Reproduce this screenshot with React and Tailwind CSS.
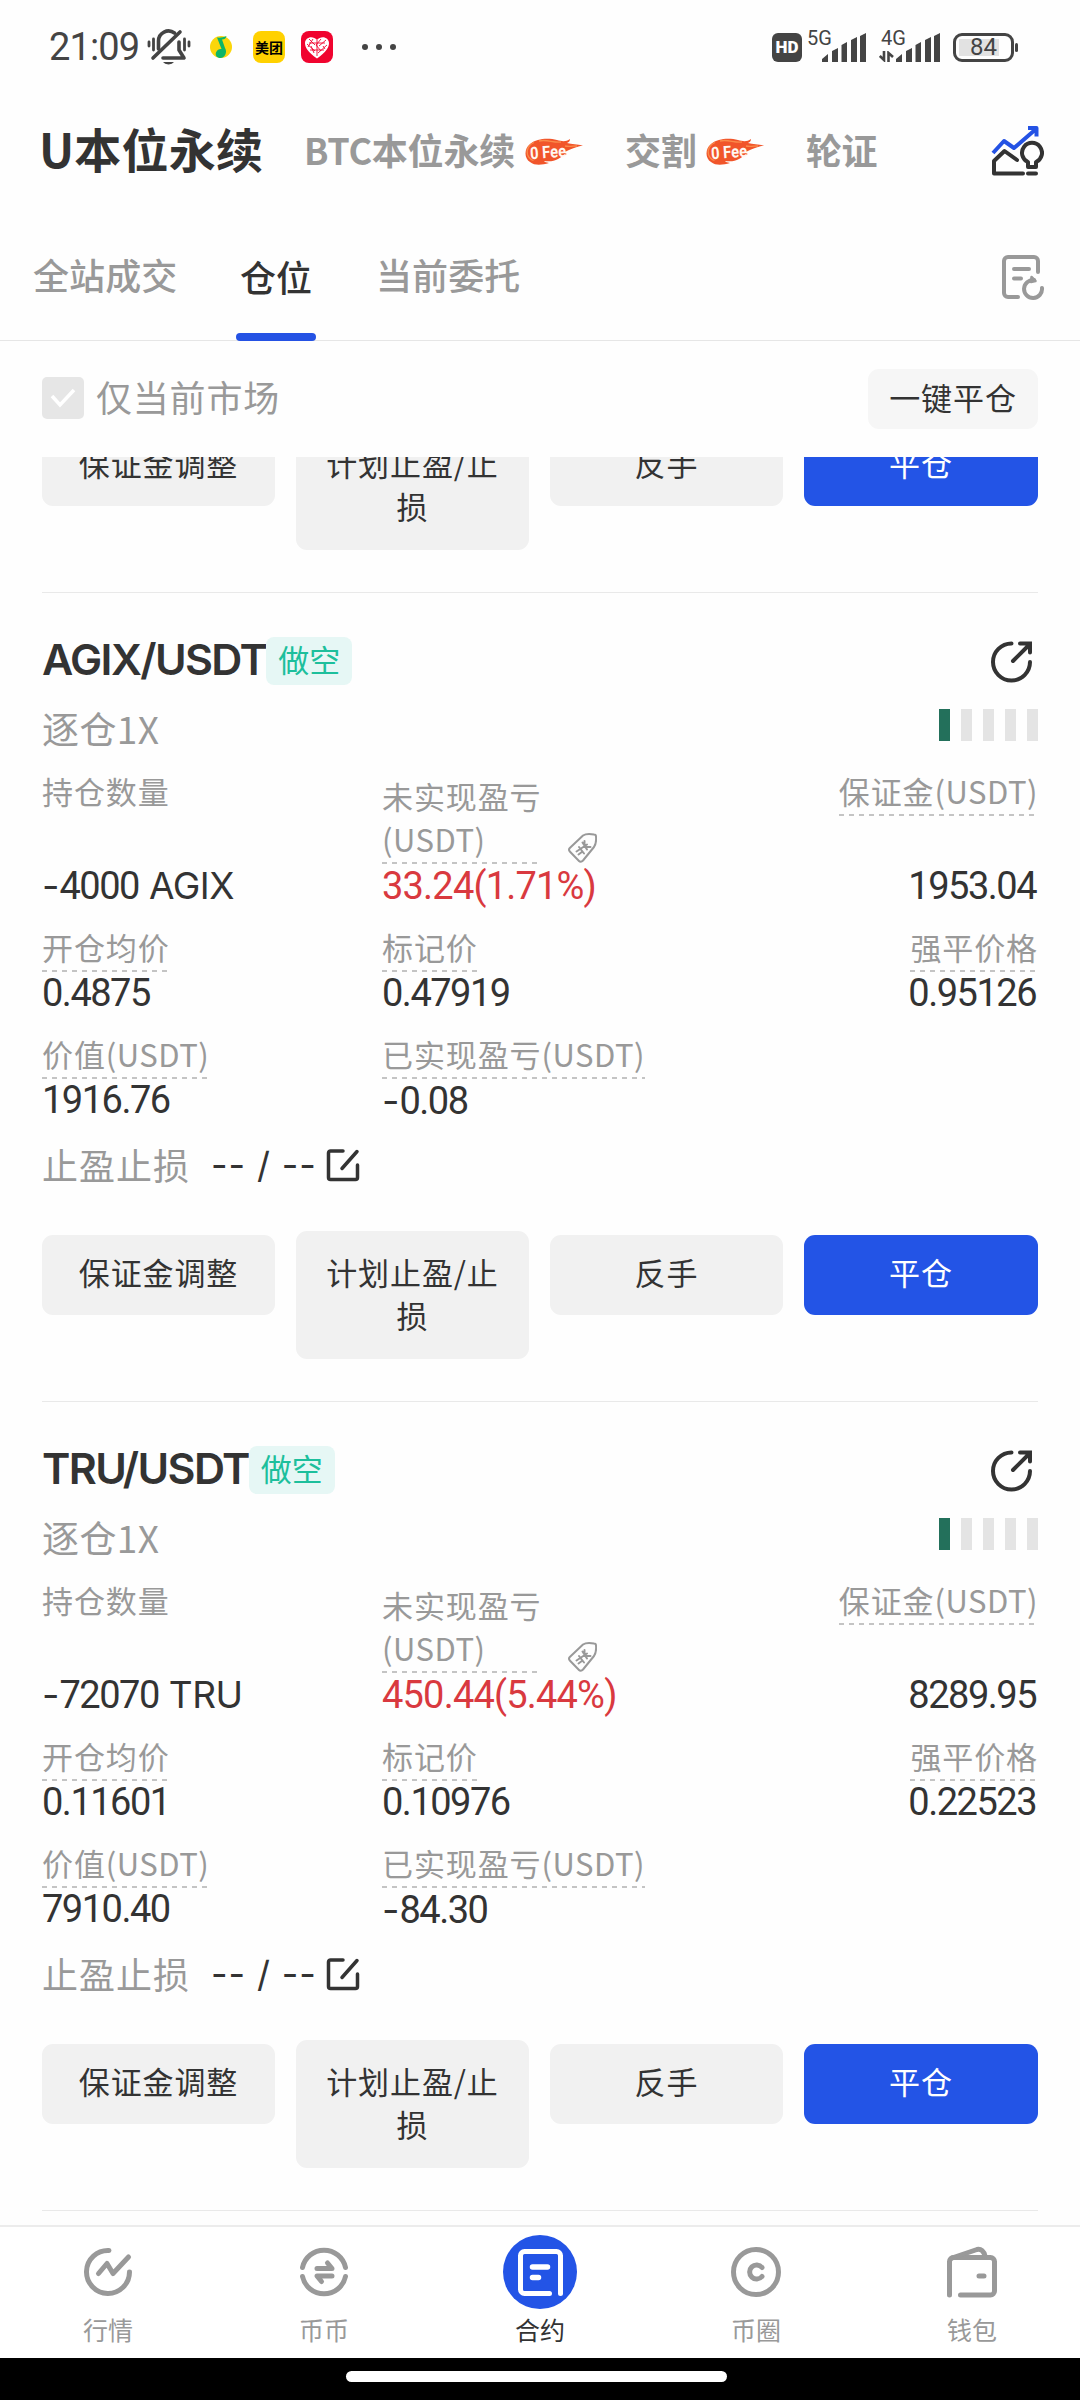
// src/App.jsx
import React from 'react';

const positions = [
  {
    pair: 'AGIX/USDT',
    size: '-4000',
    coin: 'AGIX',
    pnl: '33.24(1.71%)',
    margin: '1953.04',
    entry: '0.4875',
    mark: '0.47919',
    liq: '0.95126',
    value: '1916.76',
    realized: '-0.08',
  },
  {
    pair: 'TRU/USDT',
    size: '-72070',
    coin: 'TRU',
    pnl: '450.44(5.44%)',
    margin: '8289.95',
    entry: '0.11601',
    mark: '0.10976',
    liq: '0.22523',
    value: '7910.40',
    realized: '-84.30',
  },
];

/* ---------- icons ---------- */

const BellOffIcon = () => (
  <svg width="44" height="38" viewBox="0 0 44 38" fill="none" stroke="#444" strokeWidth="3.6" strokeLinecap="round" strokeLinejoin="round">
    <path d="M11.500 21V13a10 10 0 0 1 16-8" />
    <path d="M32 14v8l5 8H16" />
    <path d="M6 30 33 4" />
    <path d="M2 14v4M6.500 11v11M37.500 11v11M42 14v4" strokeWidth="2.800" />
    <path d="M16 34h11a6 4 0 0 1-11 0z" fill="#444" stroke="none" />
  </svg>
);

const MusicIcon = () => (
  <svg width="22" height="22" viewBox="0 0 22 22">
    <circle cx="11" cy="11" r="11" fill="#fbd60a" />
    <path d="M7 1.500c3 .5 6-.2 9.500-1.500-.5 2.500-2 3.500-4.500 3.600L15 12c3 5-1 10-4.500 10S5 19.500 6 16.500s4-4 5.500-3.500z" fill="#0cb568" />
  </svg>
);

const HeartAppIcon = () => (
  <svg width="32" height="32" viewBox="0 0 32 32">
    <rect width="32" height="32" rx="8" fill="#f0042f" />
    <path d="M16 27.500C7 21 4 16.500 4 12c0-6 8-8 12-3 4-5 12-3 12 3 0 4.500-3 9-12 15.500z" fill="#fff" />
    <path d="M8 8l6 6M6 13l8 7M12 8l-5 8M20 8l-5 6 5 6M25 9l-7 6M26 14l-9 8M16 9v16M10 15l3 7M22 15l2 3M9 19h14M8 12h16" stroke="#f0042f" strokeWidth=".9" fill="none" />
  </svg>
);

const SignalBars = () => (
  <svg width="45" height="29" viewBox="0 0 45 29" fill="#444">
    <path d="M0 29v-3l6-5v8zM10 29V18l6-3v14zM19.500 29V12l5.500-3v20zM29 29V7l6-3v25zM38 29V3l6-3v29z" />
  </svg>
);

const DataArrows = () => (
  <svg width="15" height="11" viewBox="0 0 15 11" fill="none" stroke="#444" strokeWidth="2.600">
    <path d="M5 0v9L.8 5M9.500 11V2L14 6" />
  </svg>
);

const FlameBadge = () => (
  <svg width="58" height="27" viewBox="0 0 58 27">
    <path d="M58 7.500c-6-1.500-11-1-16-2.500 2-1 3-2 3-4-4 3-8 2.500-13 1C24 0 12 0 5 6-1 11-1 20 5 24c5 4 12 3 19 1-3-.5-4-1-5-2 5 .5 10 .5 14-2 3-1.500 5-4 9-5-1-.5-2-1-4-1 4-2 10-5.500 20-7.500z" fill="#f1552a" />
    <path d="M9 4.500c-5 2-8 7-6.500 12 1 3 3 5 6 6M14 3c8-2 14 2 22 1M40 8c4 1 8 0 12 0" fill="none" stroke="#fa8b4a" strokeWidth="1.300" />
    <text x="5" y="20" fill="#fff7f0" fontSize="17" fontWeight="700" fontFamily="Roboto, sans-serif" textLength="36" lengthAdjust="spacingAndGlyphs" transform="rotate(-4 22 14)">0 Fee</text>
  </svg>
);

const StrategyIcon = () => (
  <svg width="54" height="52" viewBox="0 0 54 52" fill="none" stroke="#333" strokeWidth="4" strokeLinecap="round" strokeLinejoin="round">
    <path d="M3 28 14 16l10 7L46 4M38 3h8.500v8.500" stroke="#2452e4" strokeLinecap="butt" />
    <path d="M33 48.500H4V36l10.500-10L27 35" />
    <path d="M38 42v-5a10 10 0 1 1 8 0v5zM38 48.500h8" />
  </svg>
);

const OrderHistoryIcon = () => (
  <svg width="44" height="46" viewBox="0 0 44 46" fill="none" stroke="#999" strokeWidth="4" strokeLinecap="round" strokeLinejoin="round">
    <path d="M17 43H7a4 4 0 0 1-4-4V7a4 4 0 0 1 4-4h26a4 4 0 0 1 4 4v11" />
    <path d="M13 15h15M13 24.500h7" />
    <path d="M41 34a9 9 0 1 1-8-8" />
    <path d="M30.500 23l4 4-4.500 1z" fill="#999" strokeWidth="2.500" />
  </svg>
);

const ShareIcon = () => (
  <svg width="42" height="42" viewBox="0 0 42 42" fill="none" stroke="#333" strokeWidth="4" strokeLinecap="round">
    <path d="M20.500 2.500a18.500 18.500 0 1 0 18.500 18.500" />
    <path d="M22 20 38 4M29 2.500h10v9" />
  </svg>
);

const TagIcon = () => (
  <svg width="29" height="30" viewBox="0 0 29 30" fill="none" stroke="#999" strokeWidth="2" strokeLinecap="round" strokeLinejoin="round">
    <path d="M15 2.500c3-2 8-1.500 11-1 1.500 0 2 1 2 2 .3 3 .3 7-2 10.500L15 27.500c-1.500 1.500-3 1.500-4 .5L1.800 18.500c-1-1.300-1-2.500 0-3.500z" />
    <path d="M11 14l5 6.500M14.500 9.500l4.500 7M16.500 8v6h6M8.500 18.500l10.500-7M10.500 21.500l4-3" />
  </svg>
);

const EditIcon = () => (
  <svg width="34" height="34" viewBox="0 0 34 34" fill="none" stroke="#333" strokeWidth="3.500" strokeLinecap="round" strokeLinejoin="round">
    <path d="M17 3H4.500A2 2 0 0 0 2.500 5v24.500a2 2 0 0 0 2 2h25a2 2 0 0 0 2-2V17" />
    <path d="M16 20.500 31 3.500" />
  </svg>
);

const MarketIcon = () => (
  <svg width="50" height="52" viewBox="0 0 50 52" fill="none" stroke="#999" strokeWidth="5" strokeLinecap="round" strokeLinejoin="round">
    <path d="M26 4.500a21.500 21.500 0 1 0 20.500 21.500" />
    <path d="M15.500 27.500l8.500-10 6 10L45.500 11" />
  </svg>
);

const SpotIcon = () => (
  <svg width="50" height="52" viewBox="0 0 50 52" fill="none" stroke="#999" strokeWidth="5" strokeLinecap="round" strokeLinejoin="round">
    <path d="M3.500 21.500a22 22 0 0 1 43 0M3.500 30.500a22 22 0 0 0 43 0" />
    <path d="M18 22.500h15l-4.500-5.500M33 30h-15l4.500 5.500" />
  </svg>
);

const ContractIcon = () => (
  <svg width="74" height="74" viewBox="0 0 74 74" fill="none" stroke="#fff" strokeWidth="5" strokeLinecap="round" strokeLinejoin="round">
    <circle cx="37" cy="37" r="37" fill="#2354e6" stroke="none" />
    <path d="M46.500 58.500H21.500a4 4 0 0 1-4-4v-34a4 4 0 0 1 4-4h32a4 4 0 0 1 4 4v38" />
    <path d="M29.500 32h15M29.500 42.500h6" strokeWidth="5.500" />
  </svg>
);

const CircleIcon = () => (
  <svg width="50" height="52" viewBox="0 0 50 52" fill="none" stroke="#999" strokeWidth="5" strokeLinecap="round">
    <circle cx="25" cy="26" r="22.500" />
    <path d="M31 21.500a7 7 0 1 0 0 9" />
  </svg>
);

const WalletIcon = () => (
  <svg width="50" height="52" viewBox="0 0 50 52" fill="none" stroke="#999" strokeWidth="5" strokeLinecap="round" strokeLinejoin="round">
    <path d="M2.500 49V15.500a4 4 0 0 1 4-4h37a4 4 0 0 1 4 4V45a4 4 0 0 1-4 4h-30" />
    <path d="M5 12 30 3.500c4-1 7 2 8 6.500M32 30h5" />
  </svg>
);

/* ---------- pieces ---------- */

const StatusBar = () => (
  <div className="flex h-[94px] items-center pl-[49px] text-[#444]">
    <span className="w-[98px] font-[Roboto] text-[38px] leading-none tracking-[-0.9px]">21:09</span>
    <BellOffIcon />
    <span className="ml-[19px]"><MusicIcon /></span>
    <span className="ml-[21px] flex h-8 w-8 items-center justify-center rounded-lg bg-[#ffd100] text-[14px] leading-none font-bold text-black">美团</span>
    <span className="ml-4"><HeartAppIcon /></span>
    <span className="ml-[29px] flex gap-2">
      <i className="h-[6px] w-[6px] rounded-full bg-[#444]" />
      <i className="h-[6px] w-[6px] rounded-full bg-[#444]" />
      <i className="h-[6px] w-[6px] rounded-full bg-[#444]" />
    </span>
    <span className="ml-auto flex h-[29px] w-[30px] items-center justify-center rounded-md bg-[#444] font-[Roboto] text-[17px] leading-none font-black text-white">HD</span>
    <span className="ml-[5px] flex h-[33px] w-[59px] flex-none flex-col">
      <span className="h-0 font-[Roboto] text-[20px] leading-[15px]">5G</span>
      <span className="mt-[2px] ml-[15px]"><SignalBars /></span>
    </span>
    <span className="ml-[13px] flex h-[33px] w-[62px] flex-none flex-col">
      <span className="ml-[2px] h-0 font-[Roboto] text-[20px] leading-[15px]">4G</span>
      <span className="mt-[2px] flex items-end gap-[2px]"><DataArrows /><SignalBars /></span>
    </span>
    <span className="ml-[12px] flex h-[29px] w-[61px] items-center rounded-[9px] border-3 border-[#444] p-[3px]">
      <span className="flex h-[17px] w-[40px] items-center justify-center bg-[#e2e2e2] pl-[9px] font-[Roboto] text-[24px] leading-none">84</span>
    </span>
    <i className="mr-[62px] ml-[1px] h-[9px] w-[3px] rounded-full bg-[#444]" />
  </div>
);

const ProductTabs = () => (
  <div className="flex h-[110px] items-center pl-[39px] leading-none font-bold text-[#999]">
    <span className="w-[265px] pb-[3px] text-[47px] tracking-[0.2px] text-[#333]">U本位永续</span>
    <span className="w-[221px] text-[36px] tracking-[-0.2px]">BTC本位永续</span>
    <span className="w-[100px] pt-1"><FlameBadge /></span>
    <span className="w-[81px] text-[36px] tracking-[-0.4px]">交割</span>
    <span className="w-[100px] pt-1"><FlameBadge /></span>
    <span className="text-[36px] tracking-[-0.4px]">轮证</span>
    <span className="mr-9 ml-auto pt-1"><StrategyIcon /></span>
  </div>
);

const PositionTabs = () => (
  <div className="flex h-[137px] items-center border-b border-[#e6e6e6] pl-[33px] text-[36px] leading-none font-medium text-[#999]">
    <span className="w-[203px] pt-[4px] tracking-[0.1px]">全站成交</span>
    <span className="flex h-full w-20 flex-col items-center justify-end text-[#333]">
      <span className="mb-[39px] tracking-[0.1px]">仓位</span>
      <i className="-mb-px h-2 w-20 rounded-full bg-[#2452e4]" />
    </span>
    <span className="ml-[60px] pt-[4px] tracking-[0.1px]">当前委托</span>
    <span className="mr-[35px] ml-auto pt-[10px]"><OrderHistoryIcon /></span>
  </div>
);

const FilterRow = () => (
  <div className="flex h-[116px] items-center pr-[42px] pb-[2px] pl-[42px]">
    <span className="flex h-[42px] w-[42px] items-center justify-center rounded-[5px] bg-[#e6e6e6]">
      <svg width="26" height="20" viewBox="0 0 26 20" fill="none" stroke="#fff" strokeWidth="3.500">
        <path d="M2 8l8 9L24 2" />
      </svg>
    </span>
    <span className="ml-[12px] pb-[5px] text-[36px] leading-none tracking-[0.8px] text-[#999]">仅当前市场</span>
    <button className="mt-[2px] ml-auto h-[60px] w-[170px] rounded-[11px] bg-[#f6f6f6] pb-[4px] text-[31px] tracking-[0.9px] text-[#333]">一键平仓</button>
  </div>
);

const Actions = () => (
  <div className="flex h-[128px] items-start gap-[21px] text-[31px] leading-[43.5px] tracking-[0.9px] text-[#333]">
    <button className="mt-1 h-20 w-[233px] rounded-[11px] bg-[#f1f1f1] pb-[6px]">保证金调整</button>
    <button className="h-[128px] w-[233px] rounded-[11px] bg-[#f1f1f1] px-6 pb-1">计划止盈/止损</button>
    <button className="mt-1 h-20 w-[233px] rounded-[11px] bg-[#f1f1f1] pb-[6px]">反手</button>
    <button className="mt-1 h-20 w-[234px] rounded-[11px] bg-[#2354e6] pb-[6px] text-white">平仓</button>
  </div>
);

const Dashes = () => (
  <i className="h-[2px] w-full bg-[repeating-linear-gradient(90deg,#c4c4c4_0_5px,transparent_5px_10px)]" />
);

const Label = ({ children, unit, plain }) => (
  <span className="flex h-[45px] flex-col text-[31px] leading-[40px] tracking-[0.9px] whitespace-nowrap text-[#999]">
    <span className="h-[43px]">
      {children}
      {unit && <span className="tracking-[0.5px]">({unit})</span>}
    </span>
    {!plain && <Dashes />}
  </span>
);

// The minus sign is set wider than the digits
const Digits = ({ children }) => {
  const negative = children.startsWith('-');
  return (
    <span className="font-[Roboto] text-[38px] leading-[42px] tracking-[-1.5px] whitespace-nowrap text-[#333]">
      {negative && <span className="font-[Inter] tracking-[0px]">-</span>}
      {negative ? children.slice(1) : children}
    </span>
  );
};

const Cell = ({ label, unit, value, right }) => (
  <div className={right ? 'ml-auto flex flex-col items-end' : 'flex w-[340px] flex-col items-start'}>
    <Label unit={unit}>{label}</Label>
    <span className={right ? 'flex pr-[2px]' : 'flex'}>
      <Digits>{value}</Digits>
    </span>
  </div>
);

const PositionCard = ({ p }) => (
  <div className="flex h-[809px] flex-col border-t border-[#e9e9e9]">
    <div className="mt-[43px] flex h-[50px] items-center">
      <span className="pb-[3px] font-[Inter] text-[43px] leading-none font-semibold tracking-[-1.6px] text-[#333]">{p.pair}</span>
      <span className="flex h-12 w-[86px] items-center justify-center rounded-lg bg-[#e6f7f5] pb-[6px] text-[31px] leading-none text-[#1dbf9c]">做空</span>
      <span className="mr-[5px] ml-auto pt-[2px]"><ShareIcon /></span>
    </div>
    <div className="mt-[22px] flex h-[42px] items-center justify-between">
      <span className="pb-[2px] text-[37px] leading-none tracking-[0.4px] text-[#999]">逐仓1X</span>
      <span className="flex gap-[11px] pb-[8px]">
        <i className="h-8 w-[11px] bg-[#23705b]" />
        <i className="h-8 w-[11px] bg-[#e4e4e4]" />
        <i className="h-8 w-[11px] bg-[#e4e4e4]" />
        <i className="h-8 w-[11px] bg-[#e4e4e4]" />
        <i className="h-8 w-[11px] bg-[#e4e4e4]" />
      </span>
    </div>
    <div className="mt-[21px] flex h-[136px]">
      <div className="flex w-[340px] flex-col justify-between">
        <Label plain>持仓数量</Label>
        <span className="flex items-baseline gap-[10px]">
          <Digits>{p.size}</Digits>
          <span className="font-[Inter] text-[37px] leading-[42px] tracking-[-0.5px] text-[#333]">{p.coin}</span>
        </span>
      </div>
      <div className="flex flex-col justify-end">
        <div className="mb-[1px] flex items-end">
          <span className="flex w-[155px] flex-col text-[31px] leading-[43px] tracking-[0.9px] text-[#999]">
            <span className="whitespace-nowrap">未实现盈亏</span>
            <span className="mb-[2px] tracking-[0.5px]">(USDT)</span>
            <Dashes />
          </span>
          <span className="mb-[1px] ml-[31px]"><TagIcon /></span>
        </div>
        <span className="font-[Roboto] text-[38px] leading-[42px] tracking-[-0.8px] text-[#d9393f]">{p.pnl}</span>
      </div>
      <div className="ml-auto flex flex-col items-end justify-between">
        <Label unit="USDT">保证金</Label>
        <span className="flex pr-[2px]"><Digits>{p.margin}</Digits></span>
      </div>
    </div>
    <div className="mt-5 flex">
      <Cell label="开仓均价" value={p.entry} />
      <Cell label="标记价" value={p.mark} />
      <Cell label="强平价格" value={p.liq} right />
    </div>
    <div className="mt-5 flex">
      <Cell label="价值" unit="USDT" value={p.value} />
      <Cell label="已实现盈亏" unit="USDT" value={p.realized} />
    </div>
    <div className="mt-5 flex h-[46px] items-center">
      <span className="w-[169px] pb-[3px] text-[36px] leading-none tracking-[1px] text-[#999]">止盈止损</span>
      <span className="w-[115px] font-[Inter] text-[36px] leading-none tracking-[0.9px] whitespace-nowrap text-[#333]">-- / --</span>
      <EditIcon />
    </div>
    <div className="mt-auto mb-[42px]">
      <Actions />
    </div>
  </div>
);

const navItems = [
  { label: '行情', icon: <MarketIcon /> },
  { label: '币币', icon: <SpotIcon /> },
  { label: '合约', icon: <ContractIcon />, active: true },
  { label: '币圈', icon: <CircleIcon /> },
  { label: '钱包', icon: <WalletIcon /> },
];

const BottomNav = () => (
  <nav className="flex h-[133px] flex-none border-t-2 border-[#ececec] bg-white">
    {navItems.map((item) => (
      <div key={item.label} className="flex flex-1 flex-col items-center pt-2">
        <span className="flex h-[74px] items-center">{item.icon}</span>
        <span className={item.active ? 'mt-[7px] text-[25px] leading-[26px] text-[#333]' : 'mt-[7px] text-[25px] leading-[26px] text-[#999]'}>
          {item.label}
        </span>
      </div>
    ))}
  </nav>
);

function App() {
  return (
    <div className="flex h-[2400px] w-[1080px] flex-col overflow-hidden bg-[#fefefe] font-['Noto_Sans_CJK_SC',sans-serif]">
      <StatusBar />
      <ProductTabs />
      <PositionTabs />
      <FilterRow />

      {/* Scrolled list: the card above shows only the end of its buttons */}
      <main className="flex min-h-0 flex-1 flex-col overflow-hidden px-[42px]">
        <div className="flex h-[135px] flex-none flex-col justify-end overflow-hidden pb-[42px]">
          <Actions />
        </div>
        {positions.map((p) => (
          <div key={p.pair} className="flex-none">
            <PositionCard p={p} />
          </div>
        ))}
        <div className="flex-none border-t border-[#e9e9e9]" />
      </main>

      <BottomNav />
      <div className="flex h-[42px] flex-none justify-center bg-black pt-[13px] pr-[7px]">
        <i className="h-[11px] w-[381px] rounded-full bg-white" />
      </div>
    </div>
  );
}

export default App;
